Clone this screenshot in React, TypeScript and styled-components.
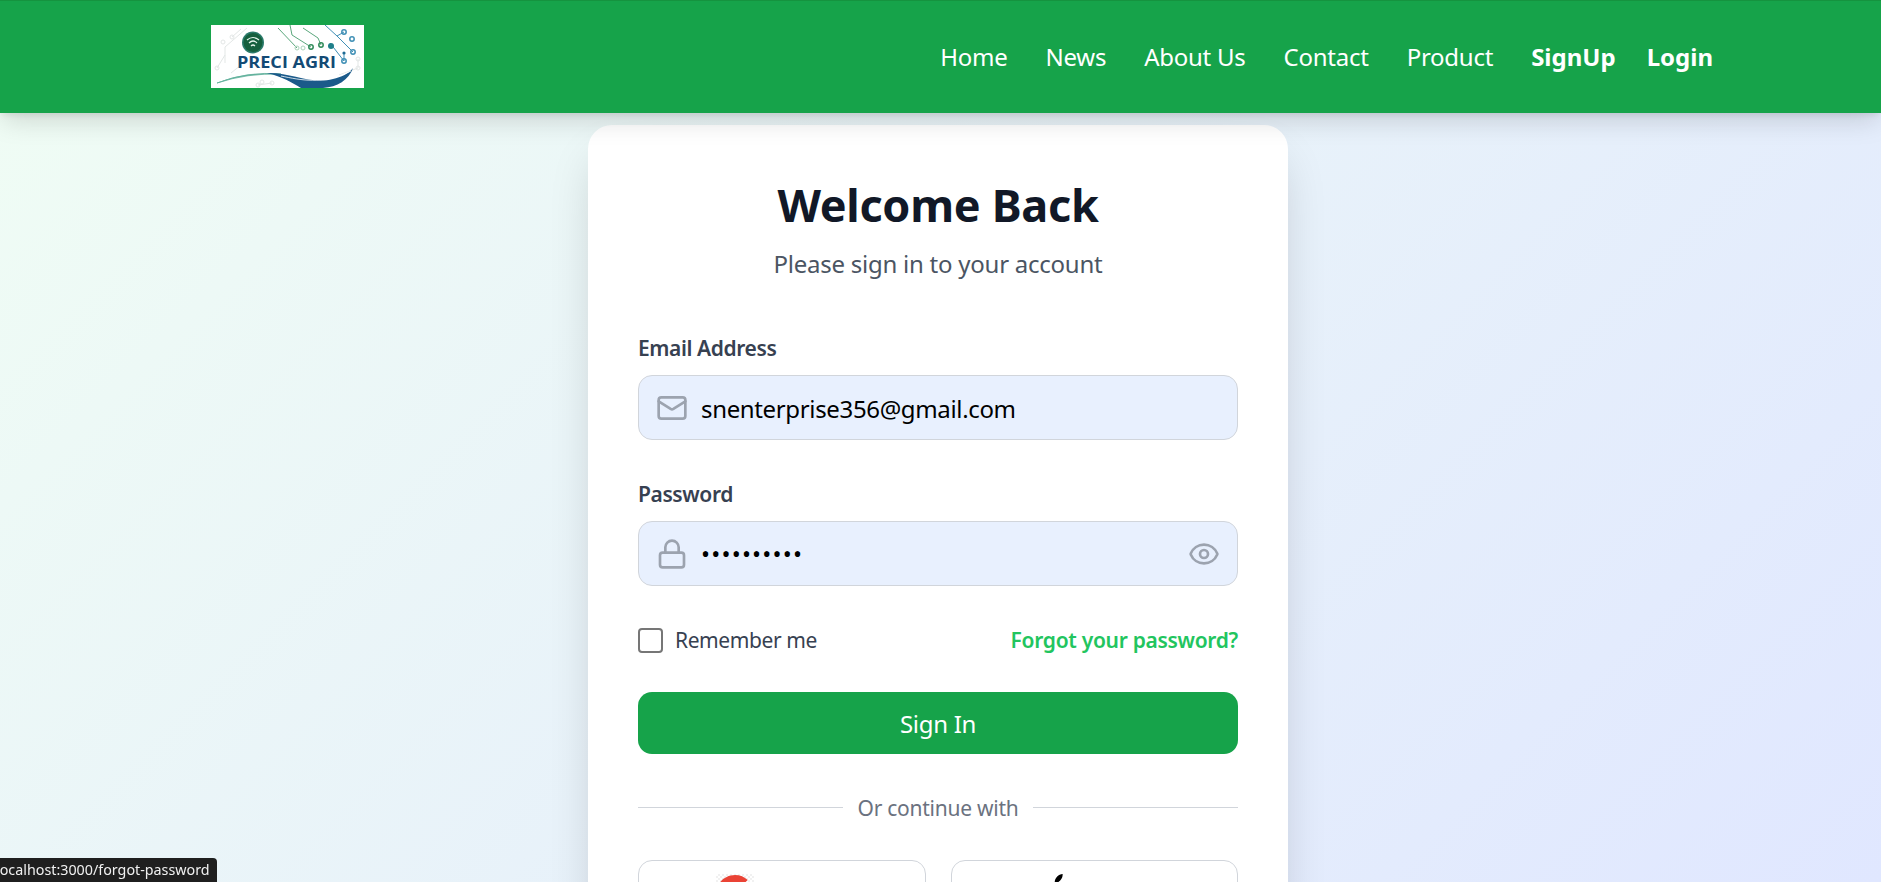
import React from 'react';
import styled, { createGlobalStyle } from 'styled-components';
import { Mail, Lock, Eye } from 'lucide-react';

const GlobalStyle = createGlobalStyle`
  html, body {
    margin: 0;
    height: 100%;
    overflow: hidden;
    font-family: "Noto Sans", "Open Sans", Arial, sans-serif;
  }
  * { box-sizing: border-box; }
`;

const Page = styled.div`
  height: 882px;
  overflow: hidden;
  background: linear-gradient(135deg, #f0fdf4 0%, #e0e7ff 100%);
`;

const Header = styled.header`
  position: relative;
  z-index: 2;
  height: 113px;
  background: #16a34a;
  border-top: 1px solid #15933f;
  padding: 24px 168px 0 211px;
  display: flex;
  justify-content: space-between;
  align-items: flex-start;
  box-shadow: 0 10px 25px -3px rgba(0, 0, 0, 0.15), 0 4px 6px -2px rgba(0, 0, 0, 0.08);
`;

const Nav = styled.nav`
  display: flex;
  align-items: center;
  gap: 38px;
  height: 63px;
`;

const NavLink = styled.a<{ $bold?: boolean }>`
  color: #fff;
  font-size: 24px;
  letter-spacing: ${props => (props.$bold ? '0' : '-0.25px')};
  font-weight: ${props => (props.$bold ? 700 : 400)};
  &:last-child {
    margin-left: -7px;
  }
`;

const Main = styled.main`
  display: flex;
  justify-content: center;
  padding: 12px 5px 0 0;
`;

const Card = styled.section`
  width: 700px;
  background: #fff;
  border-radius: 24px;
  padding: 50px;
  box-shadow: 0 25px 50px -12px rgba(0, 0, 0, 0.2);
`;

const Title = styled.h1`
  margin: 0;
  text-align: center;
  font-size: 45px;
  line-height: 60px;
  font-weight: 700;
  color: #111827;
  letter-spacing: -0.3px;
`;

const Subtitle = styled.p`
  margin: 11px 0 0;
  padding-bottom: 12px;
  text-align: center;
  font-size: 24px;
  line-height: 36px;
  color: #4b5563;
  letter-spacing: -0.25px;
`;

const Field = styled.div`
  margin-top: 40px;
`;

const Label = styled.label`
  display: block;
  font-size: 21px;
  line-height: 28px;
  font-weight: 600;
  color: #374151;
  letter-spacing: -0.4px;
  margin-bottom: 13px;
`;

const InputBox = styled.div`
  height: 65px;
  display: flex;
  align-items: center;
  padding: 0 17px;
  background: #e8f0fe;
  border: 1px solid #d1d5db;
  border-radius: 14px;
  color: #9ca3af;
`;

const InputText = styled.span`
  flex: 1;
  margin-left: 13px;
  padding-top: 1px;
  font-size: 24px;
  color: #000;
  letter-spacing: -0.35px;
`;

const Dots = styled.span`
  flex: 1;
  margin-left: 13px;
  font-size: 24px;
  letter-spacing: 1.2px;
  color: #000;
`;

const OptionsRow = styled.div`
  display: flex;
  align-items: center;
  justify-content: space-between;
  margin-top: 40px;
`;

const RememberLabel = styled.label`
  display: flex;
  align-items: center;
  gap: 12px;
  font-size: 21px;
  color: #374151;
  letter-spacing: -0.4px;
`;

const CheckBox = styled.span`
  width: 25px;
  height: 25px;
  background: #fff;
  border: 2px solid #767676;
  border-radius: 4px;
`;

const ForgotLink = styled.a`
  font-size: 21px;
  font-weight: 600;
  color: #22c55e;
  letter-spacing: -0.3px;
`;

const SubmitButton = styled.button`
  display: block;
  width: 100%;
  height: 62px;
  margin-top: 38px;
  border: none;
  border-radius: 14px;
  background: #16a34a;
  color: #fff;
  font-family: inherit;
  font-size: 24px;
  letter-spacing: -0.3px;
`;

const Divider = styled.div`
  display: flex;
  align-items: center;
  gap: 14px;
  margin-top: 38px;
  font-size: 21px;
  color: #6b7280;
  letter-spacing: -0.25px;
  &::before,
  &::after {
    content: '';
    flex: 1;
    height: 1px;
    background: #d1d5db;
  }
`;

const DividerText = styled.span`
  padding-top: 2px;
`;

const SocialRow = styled.div`
  display: grid;
  grid-template-columns: 1fr 1fr;
  gap: 25px;
  margin-top: 38px;
`;

const SocialButton = styled.button<{ $gap: number }>`
  height: 66px;
  background: #fff;
  border: 1px solid #d1d5db;
  border-radius: 14px;
  display: flex;
  align-items: center;
  justify-content: center;
  gap: ${props => props.$gap}px;
  font-family: inherit;
  font-size: 21px;
  color: #374151;
`;

const SocialLabel = styled.span`
  padding-top: 6px;
`;

const GoogleMark = styled.span`
  display: block;
  width: 38px;
  height: 38px;
  padding-top: 1px;
  background: repeating-conic-gradient(#f1f1f1 0 25%, #fff 0 50%) 0 0 / 4px 4px;
`;

const StatusBubble = styled.div`
  position: fixed;
  left: 0;
  bottom: 0;
  z-index: 5;
  height: 24px;
  width: 217px;
  padding-top: 2px;
  white-space: nowrap;
  background: #1f1f1f;
  border-top-right-radius: 4px;
  color: #f0f0f0;
  font-size: 14.3px;
  line-height: 20px;
  text-indent: -4px;
`;

const Logo = () => (
  <svg width="153" height="63" viewBox="0 0 153 63" style={{ display: 'block' }}>
    <rect width="153" height="63" fill="#fff" />
    <g fill="none" stroke="#e3e7e6" strokeWidth="1">
      <path d="M14 38 V22 L36 3 M6 43 L14 30 M21 12 L30 4 M128 50 L147 43 V34 M47 60 L61 58 M20 48 L30 40" />
      <circle cx="12" cy="17" r="2" />
      <circle cx="21" cy="12" r="2" />
      <circle cx="6" cy="43" r="2" />
      <circle cx="147" cy="43" r="2" />
      <circle cx="147" cy="34" r="2" />
      <circle cx="51" cy="57" r="2" />
      <circle cx="47" cy="60" r="2" />
      <circle cx="61" cy="58" r="2" />
    </g>
    <g fill="none" stroke="#5aa77c" strokeWidth="1">
      <path d="M67 3 L86 23 M79 0 L81 10 L100 22 M92 3 L107 13 L110 20" />
      <circle cx="86" cy="23" r="2" stroke="#a9d3b9" />
      <circle cx="92" cy="23" r="2" stroke="#a9d3b9" />
      <circle cx="100" cy="22" r="2.2" stroke="#2f8a58" strokeWidth="1.5" />
      <circle cx="110" cy="20" r="2.2" stroke="#2f8a58" strokeWidth="1.5" />
    </g>
    <g fill="none" stroke="#3f8fb5" strokeWidth="1">
      <path d="M114 0 L126 11 L133 7 M119 18 L133 36 M126 11 L142 27 M133 28 V36" />
      <circle cx="133" cy="7" r="2.2" strokeWidth="1.5" />
      <circle cx="141" cy="14" r="2.2" strokeWidth="1.5" />
      <circle cx="142" cy="27" r="2.2" strokeWidth="1.5" />
      <circle cx="133" cy="36" r="2.2" strokeWidth="1.5" />
    </g>
    <circle cx="120" cy="21" r="3" fill="#1f7f8a" />
    <circle cx="133" cy="28" r="1.6" fill="#1d6a94" />
    <circle cx="42" cy="17.5" r="11" fill="#2a7a6a" />
    <circle cx="42" cy="17.5" r="9.5" fill="#155f3d" />
    <path d="M36 15 Q42 10 48 15 M38 18 Q42 14 46 18 M40 21 Q42 19 44 21" fill="none" stroke="#e6f5ec" strokeWidth="1.2" />
    <text x="26" y="43" fontFamily="Open Sans, sans-serif" fontSize="16.8" fontWeight="700" fill="#134a75" textLength="99" lengthAdjust="spacingAndGlyphs">PRECI AGRI</text>
    <path d="M6 58 Q36 46 70 49 Q36 48 6 58 Z" fill="#5fb09a" stroke="#5fb09a" strokeWidth="0.8" />
    <path d="M56 48 C80 47 100 60 122 54 C130 52 138 49 142 43 C138 55 126 62 112 63 L90 63 C80 57 72 52 56 48 Z" fill="#1b5a8a" />
    <path d="M70 51 C90 55 110 60 140 46" fill="none" stroke="#fff" strokeWidth="0.8" />
  </svg>
);

const GoogleIcon = () => (
  <svg width="38" height="38" viewBox="0 0 48 48" style={{ display: 'block' }}>
    <path fill="#EA4335" d="M24 9.5c3.54 0 6.71 1.22 9.21 3.6l6.85-6.85C35.9 2.38 30.47 0 24 0 14.62 0 6.51 5.38 2.56 13.22l7.98 6.19C12.43 13.72 17.74 9.5 24 9.5z" />
    <path fill="#4285F4" d="M46.98 24.55c0-1.57-.15-3.09-.38-4.55H24v9.02h12.94c-.58 2.96-2.26 5.48-4.78 7.18l7.73 6c4.51-4.18 7.09-10.36 7.09-17.65z" />
    <path fill="#FBBC05" d="M10.53 28.59c-.48-1.45-.76-2.99-.76-4.59s.27-3.14.76-4.59l-7.98-6.19C.92 16.46 0 20.12 0 24c0 3.88.92 7.54 2.56 10.78l7.97-6.19z" />
  </svg>
);

const AppleIcon = () => (
  <svg width="38" height="38" viewBox="6 3 18 18" fill="#000" style={{ display: 'block' }}>
    <path d="M17.05 20.28c-.98.95-2.05.8-3.08.35-1.09-.46-2.09-.48-3.24 0-1.44.62-2.2.44-3.06-.35C2.79 15.25 3.51 7.59 9.05 7.31c1.35.07 2.29.74 3.08.8 1.18-.24 2.31-.93 3.57-.84 1.51.12 2.65.72 3.4 1.8-3.12 1.87-2.38 5.98.48 7.13-.57 1.5-1.31 2.99-2.54 4.09zM12.03 7.25c-.15-2.23 1.66-4.07 3.74-4.25.29 2.58-2.34 4.5-3.74 4.25z" />
  </svg>
);

const App: React.FC = () => {
  return (
    <Page>
      <GlobalStyle />
      <Header>
        <Logo />
        <Nav>
          <NavLink>Home</NavLink>
          <NavLink>News</NavLink>
          <NavLink>About Us</NavLink>
          <NavLink>Contact</NavLink>
          <NavLink>Product</NavLink>
          <NavLink $bold>SignUp</NavLink>
          <NavLink $bold>Login</NavLink>
        </Nav>
      </Header>
      <Main>
        <Card>
          <Title>Welcome Back</Title>
          <Subtitle>Please sign in to your account</Subtitle>
          <Field>
            <Label>Email Address</Label>
            <InputBox>
              <Mail size={32} strokeWidth={2} />
              <InputText>snenterprise356@gmail.com</InputText>
            </InputBox>
          </Field>
          <Field>
            <Label>Password</Label>
            <InputBox>
              <Lock size={32} strokeWidth={2} />
              <Dots>••••••••••</Dots>
              <Eye size={32} strokeWidth={2} />
            </InputBox>
          </Field>
          <OptionsRow>
            <RememberLabel>
              <CheckBox />
              Remember me
            </RememberLabel>
            <ForgotLink>Forgot your password?</ForgotLink>
          </OptionsRow>
          <SubmitButton>Sign In</SubmitButton>
          <Divider>
            <DividerText>Or continue with</DividerText>
          </Divider>
          <SocialRow>
            <SocialButton $gap={22}>
              <GoogleMark>
                <GoogleIcon />
              </GoogleMark>
              <SocialLabel>Google</SocialLabel>
            </SocialButton>
            <SocialButton $gap={10}>
              <AppleIcon />
              <SocialLabel>Apple</SocialLabel>
            </SocialButton>
          </SocialRow>
        </Card>
      </Main>
      <StatusBubble>localhost:3000/forgot-password</StatusBubble>
    </Page>
  );
};

export default App;
